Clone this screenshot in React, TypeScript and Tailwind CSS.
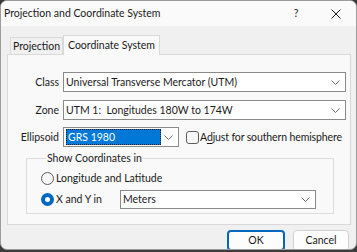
import React from "react";

const Chevron = () => (
  <svg width="9" height="5" viewBox="0 0 9 5" className="shrink-0">
    <path d="M0.5 0.5 L4.5 4.5 L8.5 0.5" fill="none" stroke="#6b6b6b" strokeWidth="1" />
  </svg>
);

function Select({ value, className }: { value: string; className: string }) {
  return (
    <div
      className={`flex items-center justify-between border border-[#8a8a8a] bg-white pl-[2px] pr-[5px] ${className}`}
    >
      <span className="whitespace-pre">{value}</span>
      <Chevron />
    </div>
  );
}

function Radio({ checked, label }: { checked?: boolean; label: string }) {
  return (
    <div className="flex items-center gap-[2px]">
      {checked ? (
        <span className="flex h-[13px] w-[13px] items-center justify-center rounded-full bg-[#0067c0]">
          <span className="h-[5px] w-[5px] rounded-full bg-white" />
        </span>
      ) : (
        <span className="h-[13px] w-[13px] rounded-full border border-[#5d5d5d] bg-[#f7f7f7]" />
      )}
      <span>{label}</span>
    </div>
  );
}

export default function App() {
  return (
    <div className="h-[252px] w-[357px] overflow-hidden whitespace-nowrap bg-[#3b3b3b] font-['Lato',sans-serif] text-[10.5px] leading-none text-[#1a1a1a]">
      <div className="flex h-[250px] flex-col overflow-hidden rounded-[7px] border border-[#9c9c9c] bg-[#f0f0f0]">
        {/* title bar */}
        <div className="flex h-[25px] shrink-0 items-center bg-[#fafafa] pl-[3px]">
          <span className="flex-1">Projection and Coordinate System</span>
          <span className="w-[40px] text-center">?</span>
          <span className="flex w-[40px] justify-center">
            <svg width="10" height="10" viewBox="0 0 10 10">
              <path d="M0.5 0.5 L9.5 9.5 M9.5 0.5 L0.5 9.5" stroke="#1a1a1a" strokeWidth="1" />
            </svg>
          </span>
        </div>

        {/* body */}
        <div className="flex flex-1 flex-col pl-[6px] pr-[5px] pt-[9px]">
          {/* tabs */}
          <div className="relative z-10 -mb-px flex items-end pl-[3px]">
            <div className="mb-px flex h-[17px] w-[53px] items-center justify-center border border-b-0 border-[#d9d9d9] bg-[#f0f0f0]">
              Projection
            </div>
            <div className="flex h-[20px] w-[97px] items-center justify-center border border-b-0 border-[#d9d9d9] bg-[#f9f9f9]">
              Coordinate System
            </div>
          </div>

          {/* panel */}
          <div className="flex h-[171px] flex-col border border-[#d9d9d9] bg-[#f9f9f9] pt-[17px]">
            <div className="flex items-center">
              <span className="w-[51px] text-right">Class</span>
              <Select value="Universal Transverse Mercator (UTM)" className="ml-[4px] h-[20px] w-[283px]" />
            </div>
            <div className="mt-[8px] flex items-center">
              <span className="w-[51px] text-right">Zone</span>
              <Select value="UTM 1:  Longitudes 180W to 174W" className="ml-[4px] h-[20px] w-[283px]" />
            </div>
            <div className="mt-[7px] flex items-center">
              <span className="w-[51px] text-right">Ellipsoid</span>
              <div className="ml-[4px] flex h-[20px] w-[116px] items-center justify-between border border-[#8a8a8a] bg-white pl-[2px] pr-[5px]">
                <span className="flex h-[16px] w-[95px] items-center border border-dotted border-[#1a1a1a] bg-[#0078d7] pl-px text-white">
                  GRS 1980
                </span>
                <Chevron />
              </div>
              <span className="ml-[7px] h-[13px] w-[13px] shrink-0 rounded-[3px] border border-[#5d5d5d] bg-[#f7f7f7]" />
              <span className="ml-[1px] tracking-[-0.12px]">
                A<span className="underline underline-offset-2">d</span>just for southern hemisphere
              </span>
            </div>

            <fieldset className="ml-[18px] mr-[16px] mt-[6px] h-[61px] border border-[#dcdcdc] pl-[14px]">
              <legend className="ml-[5px] px-[1px]">Show Coordinates in</legend>
              <div className="mt-[8px]">
                <Radio label="Longitude and Latitude" />
              </div>
              <div className="mt-[5px] flex items-center">
                <div className="w-[79px]">
                  <Radio checked label="X and Y in" />
                </div>
                <Select value="Meters" className="h-[19px] w-[196px]" />
              </div>
            </fieldset>
          </div>

          {/* buttons */}
          <div className="mt-[5px] flex justify-end gap-[8px] pr-[2px]">
            <button className="h-[21px] w-[58px] rounded-[4px] border-2 border-[#0067c0] bg-[#fdfdfd] leading-none">
              OK
            </button>
            <button className="h-[21px] w-[56px] rounded-[4px] border border-[#d0d0d0] bg-[#fdfdfd] leading-none">
              Cancel
            </button>
          </div>
        </div>
      </div>
    </div>
  );
}
